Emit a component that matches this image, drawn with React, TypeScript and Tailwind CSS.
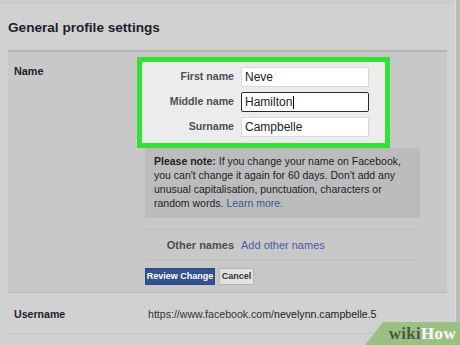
export default function App() {
  const font = { fontFamily: '"Liberation Sans", Arial, sans-serif' };
  return (
    <div
      className="relative flex h-[345px] w-[460px] overflow-hidden bg-[#d1d1d1] text-[#1d2129]"
      style={font}
    >
      <div className="flex w-[455px] flex-col">
        <div className="h-[4px] border-b border-[#c6c6c6] bg-[#cfcfcf]" />
        <div className="px-[8px] pt-[14px] pb-[12px] text-[13.6px] font-bold leading-[20px] text-[#1d2129]">
          General profile settings
        </div>
        <div className="mx-[8px] h-[2px] bg-[#b3b3b3]" />
        <div className="mx-[8px] flex h-[241px] border-b border-[#b9b9b9] bg-[#c8c8c8]">
          <div className="w-[129px] pl-[6px] pt-[12px] text-[10.8px] font-bold leading-[14px]">Name</div>
          <div className="flex flex-col pt-[5px]">
            <div className="flex w-[253px] flex-col gap-[5px] border-[5px] border-[#35e035] bg-[#ececec] pt-[5px] pb-[6px]">
              {[
                { l: 'First name', v: 'Neve', f: false },
                { l: 'Middle name', v: 'Hamilton', f: true },
                { l: 'Surname', v: 'Campbelle', f: false },
              ].map((r) => (
                <div key={r.l} className="flex items-center">
                  <div className="w-[92px] text-right text-[10.6px] font-bold text-[#4b4f56]">{r.l}</div>
                  <div
                    className={
                      r.f
                        ? 'ml-[7px] flex h-[20px] w-[128px] items-center rounded-[2px] border border-[#2a2a2a] bg-white px-[3px] text-[12px]'
                        : 'ml-[7px] flex h-[20px] w-[128px] items-center border border-[#d8d8d8] bg-white px-[3px] text-[12px]'
                    }
                  >
                    {r.v}
                    {r.f && <span className="ml-[1px] inline-block h-[13px] w-[1px] bg-black" />}
                  </div>
                </div>
              ))}
            </div>
            <div className="ml-[8px] w-[275px] bg-[#bcbcbc] px-[9px] pt-[6px] pb-[8px] text-[10.5px] leading-[14px] text-[#1d2129]">
              <span className="font-bold">Please note:</span> If you change your name on Facebook, you can't change it again
              for 60 days. Don't add any unusual capitalisation, punctuation, characters or random words.{' '}
              <span className="text-[#3b5998]">Learn more.</span>
            </div>
            <div className="ml-[8px] mt-[11px] w-[275px] border-t border-[#bdbdbd]" />
            <div className="flex items-center pt-[8px] pb-[8px] text-[11px] leading-[14px]">
              <div className="w-[97px] text-right font-bold text-[#4b4f56]">Other names</div>
              <div className="ml-[7px] text-[#4a5aa8]">Add other names</div>
            </div>
            <div className="ml-[8px] w-[275px] border-t border-[#bdbdbd]" />
            <div className="ml-[8px] mt-[7px] flex gap-[4px]">
              <div className="flex h-[17px] w-[70px] items-center justify-center whitespace-nowrap border border-[#2c477e] bg-[#34508e] text-[9px] font-bold text-white">
                Review Change
              </div>
              <div className="flex h-[17px] w-[35px] items-center justify-center whitespace-nowrap border border-[#b5b5b5] bg-[#e2e2e2] text-[9px] font-bold text-[#333]">
                Cancel
              </div>
            </div>
          </div>
        </div>
        <div className="mx-[8px] flex h-[41px] items-center border-b border-[#c4c4c4] pt-[3px] text-[10.6px]">
          <div className="w-[140px] pl-[6px] font-bold">Username</div>
          <div className="text-[#333]">
            https://www.facebook.com/<span className="text-[#1d2129]">nevelynn.campbelle.5</span>
          </div>
        </div>
      </div>
      <div className="w-[5px] border-l border-[#dcdcdc] bg-[#bcbcbc]" />
      <div
        className="absolute bottom-0 right-0 flex h-[23px] w-[95px] items-center justify-end pr-[4px] bg-[#9cbf84] [clip-path:polygon(19%_0,100%_0,100%_100%,0_100%)]"
      >
        <span
          className="text-[17px] font-bold leading-none tracking-[0.3px]"
          style={{ fontFamily: '"Liberation Serif", "DejaVu Serif", serif' }}
        >
          <span className="text-[#4b5a45]">wiki</span>
          <span className="text-white">How</span>
        </span>
      </div>
    </div>
  );
}
